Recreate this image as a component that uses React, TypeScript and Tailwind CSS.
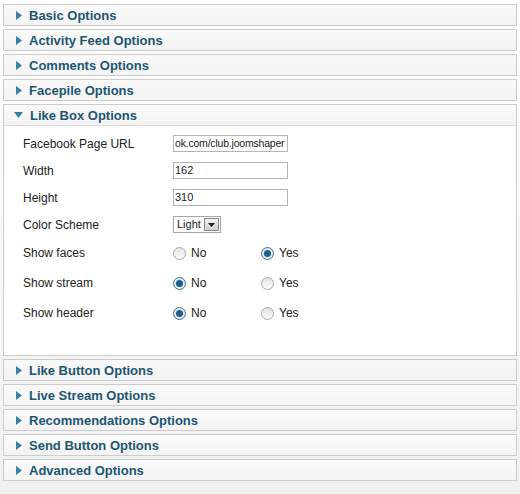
import React from 'react';

const before = ['Basic Options', 'Activity Feed Options', 'Comments Options', 'Facepile Options'];
const after = ['Like Button Options', 'Live Stream Options', 'Recommendations Options', 'Send Button Options', 'Advanced Options'];

function Arrow({ open }: { open?: boolean }) {
  return open ? (
    <svg width="9" height="6" viewBox="0 0 9 6" className="shrink-0">
      <path d="M0 0 L9 0 L4.5 6 Z" fill="#3a7fa8" />
    </svg>
  ) : (
    <svg width="6" height="9" viewBox="0 0 6 9" className="shrink-0 ml-[2px]">
      <path d="M0 0 L6 4.5 L0 9 Z" fill="#3a7fa8" />
    </svg>
  );
}

function Header({ title, open }: { title: string; open?: boolean }) {
  return (
    <div className="h-[20px] flex items-center gap-[7px] pl-[10px] bg-gradient-to-b from-[#fafafa] to-[#f3f3f3]">
      <Arrow open={open} />
      <span className="text-[13px] font-bold text-[#1d5673] leading-none">{title}</span>
    </div>
  );
}

function Radio({ checked }: { checked?: boolean }) {
  return (
    <span
      className={
        'w-[13px] h-[13px] rounded-full border flex items-center justify-center ' +
        (checked ? 'border-[#4d6f86] bg-[#dfe9f0]' : 'border-[#a9a9a9] bg-gradient-to-b from-[#e4e4e4] to-[#fbfbfb]')
      }
    >
      {checked && <span className="w-[7px] h-[7px] rounded-full bg-[#1c5f8c]" />}
    </span>
  );
}

function RadioRow({ label, yes }: { label: string; yes: boolean }) {
  return (
    <div className="h-[30px] flex items-center">
      <span className="w-[150px]">{label}</span>
      <span className="w-[88px] flex items-center gap-[5px]">
        <Radio checked={!yes} />
        No
      </span>
      <span className="flex items-center gap-[5px]">
        <Radio checked={yes} />
        Yes
      </span>
    </div>
  );
}

export default function App() {
  return (
    <div className="w-[520px] h-[494px] bg-gradient-to-b from-[#ffffff] to-[#f0f0f0] pt-[4px] px-[3px] font-['Liberation_Sans',Arial,sans-serif]">
      <div className="w-[514px] flex flex-col gap-[3px]">
        {before.map(t => (
          <div key={t} className="border border-[#cccccc]">
            <Header title={t} />
          </div>
        ))}
        <div className="border border-[#cccccc]">
          <Header title="Like Box Options" open />
          <div className="bg-white border-t border-[#dddddd] h-[230px] pl-[19px] pt-[4px] text-[12px] text-[#222222]">
            <div className="h-[27px] flex items-center">
              <span className="w-[150px]">Facebook Page URL</span>
              <span className="w-[115px] h-[17px] border border-[#b5b5b5] text-[10.5px] leading-[15px] px-[1px] overflow-hidden whitespace-nowrap tracking-[-0.2px]">
                ok.com/club.joomshaper
              </span>
            </div>
            <div className="h-[27px] flex items-center">
              <span className="w-[150px]">Width</span>
              <span className="w-[115px] h-[17px] border border-[#b5b5b5] text-[11px] leading-[15px] px-[1px]">162</span>
            </div>
            <div className="h-[27px] flex items-center">
              <span className="w-[150px]">Height</span>
              <span className="w-[115px] h-[17px] border border-[#b5b5b5] text-[11px] leading-[15px] px-[1px]">310</span>
            </div>
            <div className="h-[27px] flex items-center">
              <span className="w-[150px]">Color Scheme</span>
              <span className="h-[17px] border border-[#a5a5a5] flex items-center text-[11px] pl-[3px]">
                Light
                <span className="ml-[3px] mr-[1px] w-[15px] h-[13px] bg-gradient-to-b from-[#f0f0f0] to-[#d0d0d0] border border-[#888888] flex items-center justify-center">
                  <svg width="7" height="4" viewBox="0 0 7 4">
                    <path d="M0 0 L7 0 L3.5 4 Z" fill="#222" />
                  </svg>
                </span>
              </span>
            </div>
            <RadioRow label="Show faces" yes />
            <RadioRow label="Show stream" yes={false} />
            <RadioRow label="Show header" yes={false} />
          </div>
        </div>
        {after.map(t => (
          <div key={t} className="border border-[#cccccc]">
            <Header title={t} />
          </div>
        ))}
      </div>
    </div>
  );
}
